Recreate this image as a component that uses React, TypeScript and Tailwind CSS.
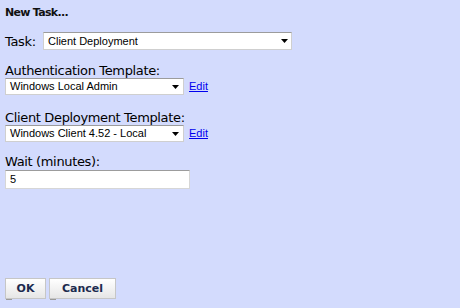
import React from "react";

const labelFont = { fontFamily: '"DejaVu Sans", Verdana, sans-serif' };
const fieldFont = { fontFamily: '"Liberation Sans", Arial, sans-serif' };

function Arrow() {
    return (
        <svg width="7" height="4" viewBox="0 0 7 4" className="shrink-0">
            <path d="M0 0 H7 L3.5 4 Z" fill="#000" />
        </svg>
    );
}

function FakeSelect({ value, width }: { value: string; width: string }) {
    return (
        <div
            className={`flex h-[17px] items-center justify-between border border-[#cfcfcf] border-t-[#9c9c9c] bg-white pl-[4px] pr-[4px] text-[11px] text-black ${width}`}
            style={fieldFont}
        >
            <span className="leading-none">{value}</span>
            <Arrow />
        </div>
    );
}

function EditLink() {
    return (
        <a href="#" className="ml-[5px] text-[11px] leading-none text-[#0000ee] underline" style={fieldFont}>
            Edit
        </a>
    );
}

function Button({ children, width }: { children: React.ReactNode; width: string }) {
    return (
        <button
            className={`relative h-[21px] border border-[#c6c6c6] bg-gradient-to-b from-white to-[#e6e6e6] text-[11px] font-bold leading-none text-[#1c2a4e] ${width}`}
            style={labelFont}
        >
            {children}
            <span className="absolute -bottom-[2px] left-0 h-px w-[6px] bg-[#9a9a9a]" />
        </button>
    );
}

export default function App() {
    return (
        <div className="flex h-[308px] w-[460px] flex-col bg-[#d3dbfd] px-[5px] pt-[6px] pb-[9px] text-black" style={labelFont}>
            <div className="text-[11px] font-bold leading-[13px] tracking-[-0.7px] text-[#111]">New Task...</div>

            <div className="mt-[13px] flex h-[18px] items-center">
                <span className="w-[38px] text-[13px] leading-none tracking-[-0.35px]">Task:</span>
                <div className="ml-0">
                    <div
                        className="flex h-[18px] w-[249px] items-center justify-between border border-[#cfcfcf] border-t-[#9c9c9c] bg-white pl-[4px] pr-[3px] text-[11px]"
                        style={fieldFont}
                    >
                        <span className="leading-none">Client Deployment</span>
                        <Arrow />
                    </div>
                </div>
            </div>

            <div className="mt-[14px] text-[13px] leading-[14px] tracking-[-0.35px]">Authentication Template:</div>
            <div className="flex items-center">
                <FakeSelect value="Windows Local Admin" width="w-[179px]" />
                <EditLink />
            </div>

            <div className="mt-[15px] text-[13px] leading-[15px] tracking-[-0.35px]">Client Deployment Template:</div>
            <div className="flex items-center">
                <FakeSelect value="Windows Client 4.52 - Local" width="w-[179px]" />
                <EditLink />
            </div>

            <div className="mt-[12px] text-[13px] leading-[16px] tracking-[-0.35px]">Wait (minutes):</div>
            <div
                className="flex h-[19px] w-[185px] items-center border border-[#d6d6d6] border-t-[#9c9c9c] bg-white pl-[4px] text-[11px]"
                style={fieldFont}
            >
                5
            </div>

            <div className="mt-auto flex gap-[3px]">
                <Button width="w-[41px]">OK</Button>
                <Button width="w-[67px]">Cancel</Button>
            </div>
        </div>
    );
}
